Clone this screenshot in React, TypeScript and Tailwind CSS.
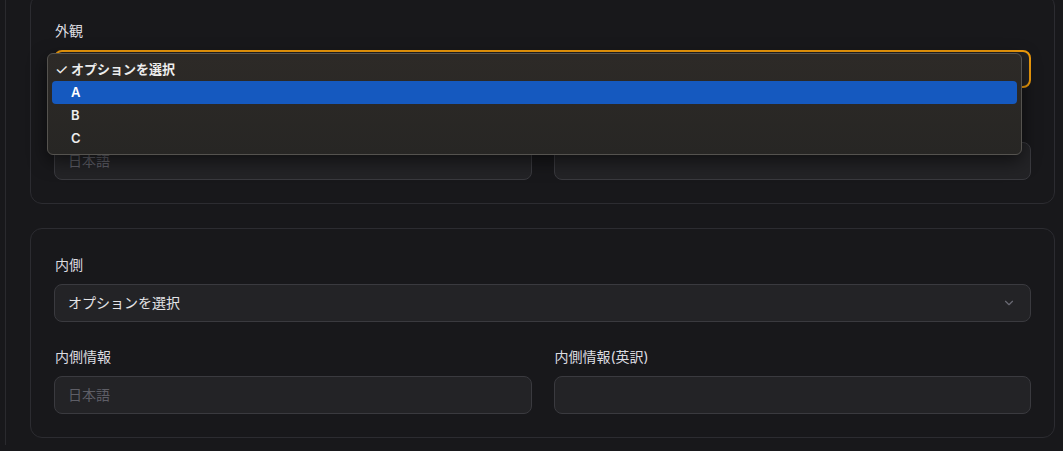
import { ChevronDown } from "lucide-react"

const font = { fontFamily: 'Inter, "Noto Sans CJK JP", sans-serif' }

function Label({ children }: { children: React.ReactNode }) {
  return <div className="text-sm leading-5 text-[#dcdce0] mb-[9px] pl-px">{children}</div>
}

function SelectBox({ focused }: { focused?: boolean }) {
  return (
    <div
      className={
        focused
          ? "h-[38px] rounded-lg border-2 border-[#f29d0c] bg-[#232326] flex items-center pl-[12px] pr-[14px]"
          : "h-[38px] rounded-lg border border-[#3a3a3f] bg-[#232326] flex items-center pl-[13px] pr-[14px]"
      }
    >
      <span className="flex-1 text-sm text-[#e4e4e7]">オプションを選択</span>
      <ChevronDown size={14} strokeWidth={2} className="text-[#6a6a74]" />
    </div>
  )
}

function TextInput({ placeholder }: { placeholder?: string }) {
  return (
    <div className="h-[38px] rounded-lg border border-[#3a3a3f] bg-[#232326] flex items-center px-[13px]">
      <span className="text-sm text-[#5e5e66]">{placeholder}</span>
    </div>
  )
}

function Card({
  title,
  infoLabel,
  focused,
  children,
}: {
  title: string
  infoLabel: string
  focused?: boolean
  children?: React.ReactNode
}) {
  return (
    <div className="relative rounded-xl border border-[#2c2c31] bg-[#18181b] px-[23px] pt-[26px] pb-[23px]">
      <Label>{title}</Label>
      <SelectBox focused={focused} />
      <div className="grid grid-cols-2 gap-[22px] mt-[25px]">
        <div>
          <Label>{infoLabel}</Label>
          <TextInput placeholder="日本語" />
        </div>
        <div>
          <Label>{infoLabel}(英訳)</Label>
          <TextInput />
        </div>
      </div>
      {children}
    </div>
  )
}

function Dropdown() {
  const items = ["A", "B", "C"]
  return (
    <div className="absolute left-[16px] top-[58px] w-[975px] rounded-md border border-[#55534f] bg-gradient-to-b from-[#2d2a27] to-[#272624] shadow-[0_6px_18px_rgba(0,0,0,0.55)] px-[4px] py-[4px] text-[13px] font-semibold text-[#ededed]">
      <div className="h-[23px] flex items-center pl-[3px]">
        <span className="w-[16px] text-[15px] leading-none font-normal">✓</span>
        <span>オプションを選択</span>
      </div>
      {items.map((it, i) => (
        <div
          key={it}
          className={
            i === 0
              ? "h-[23px] flex items-center pl-[19px] rounded-[4px] bg-[#1559bf] text-white"
              : "h-[23px] flex items-center pl-[19px]"
          }
        >
          {it}
        </div>
      ))}
    </div>
  )
}

export default function App() {
  return (
    <div className="h-[451px] overflow-hidden bg-[#18181b]" style={font}>
      <div className="ml-[5px] min-h-[451px] border-l border-[#2a2a2e] pl-[24px] pr-2">
        <div className="-mt-[6px] flex flex-col gap-6">
          <Card title="外観" infoLabel="外観情報" focused>
            <Dropdown />
          </Card>
          <Card title="内側" infoLabel="内側情報" />
        </div>
      </div>
    </div>
  )
}
